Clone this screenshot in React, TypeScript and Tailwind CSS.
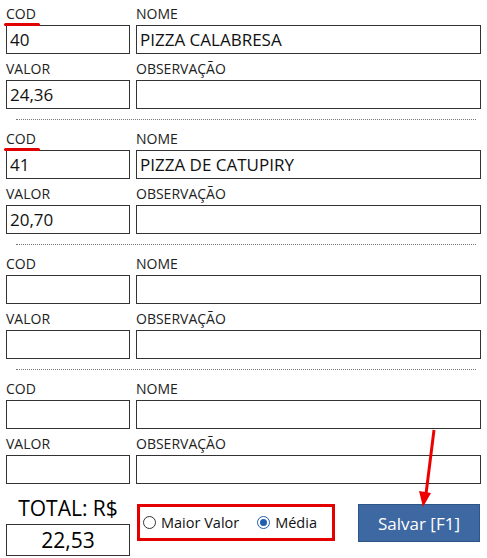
import React from 'react'

type Item = { cod: string; nome: string; valor: string; obs: string; marked?: boolean }

const items: Item[] = [
  { cod: '40', nome: 'PIZZA CALABRESA', valor: '24,36', obs: '', marked: true },
  { cod: '41', nome: 'PIZZA DE CATUPIRY', valor: '20,70', obs: '', marked: true },
  { cod: '', nome: '', valor: '', obs: '' },
  { cod: '', nome: '', valor: '', obs: '' },
]

function Label({ text, marked }: { text: string; marked?: boolean }) {
  return (
    <div className="h-[25px] flex items-end pb-[4px] text-[14px] leading-none text-[#222]">
      <span className="relative">
        {text}
        {/* red annotation underline */}
        {marked && <span className="absolute left-[-2px] right-[-4px] bottom-[-5px] h-[3px] bg-[#e00000] rounded-full" />}
      </span>
    </div>
  )
}

function Field({ value }: { value: string }) {
  return (
    <div className="h-[29px] border border-[#333] bg-white flex items-center px-[3px] text-[17px] text-[#111] leading-none">
      {value}
    </div>
  )
}

function Block({ item, last }: { item: Item; last?: boolean }) {
  return (
    <div className={last ? '' : 'h-[125px]'}>
      <div className="grid grid-cols-[124px_1fr] gap-x-[6px]">
        <div>
          <Label text="COD" marked={item.marked} />
          <Field value={item.cod} />
        </div>
        <div>
          <Label text="NOME" />
          <Field value={item.nome} />
        </div>
        <div className="mt-px">
          <Label text="VALOR" />
          <Field value={item.valor} />
        </div>
        <div className="mt-px">
          <Label text="OBSERVAÇÃO" />
          <Field value={item.obs} />
        </div>
      </div>
      {!last && <div className="mt-[10px] ml-[10px] mr-[5px] border-t border-dotted border-[#777]" />}
    </div>
  )
}

export default function App() {
  return (
    <div className="relative w-[487px] h-[558px] bg-white overflow-hidden px-[6px]" style={{ fontFamily: '"Open Sans", "Noto Sans", sans-serif' }}>
      {items.map((it, i) => (
        <Block key={i} item={it} last={i === items.length - 1} />
      ))}

      <div className="flex items-start mt-[13px]">
        <div className="w-[124px] flex flex-col items-center">
          <div className="text-[21px] leading-none text-black mt-[1px]">TOTAL: R$</div>
          <div className="mt-[5px] w-full h-[32px] border border-[#333] flex items-center justify-center text-[21px] leading-none text-black">
            22,53
          </div>
        </div>

        <div className="ml-[7px] mt-[7px] w-[198px] h-[37px] border-[3px] border-[#e50000] flex items-center gap-[6px] px-[3px] text-[14.5px] text-[#111]">
          <label className="flex items-center gap-[5px]">
            <span className="w-[13px] h-[13px] rounded-full border border-[#333] bg-white" />
            Maior Valor
          </label>
          <label className="flex items-center gap-[5px] ml-[12px]">
            <span className="w-[13px] h-[13px] rounded-full border border-[#1f5fae] bg-white flex items-center justify-center">
              <span className="w-[7px] h-[7px] rounded-full bg-[#1f5fae]" />
            </span>
            Média
          </label>
        </div>

        <button className="ml-[23px] mt-[7px] w-[122px] h-[38px] bg-[#3d68a2] border border-[#2e5587] text-white text-[17px] leading-none">
          Salvar [F1]
        </button>
      </div>

      {/* red annotation arrow */}
      <svg className="absolute left-0 top-0 pointer-events-none" width="487" height="558">
        <line x1="434" y1="430" x2="426" y2="494" stroke="#ee0000" strokeWidth="3" />
        <polygon points="419,491 431,493 423,507" fill="#ee0000" />
      </svg>
    </div>
  )
}
